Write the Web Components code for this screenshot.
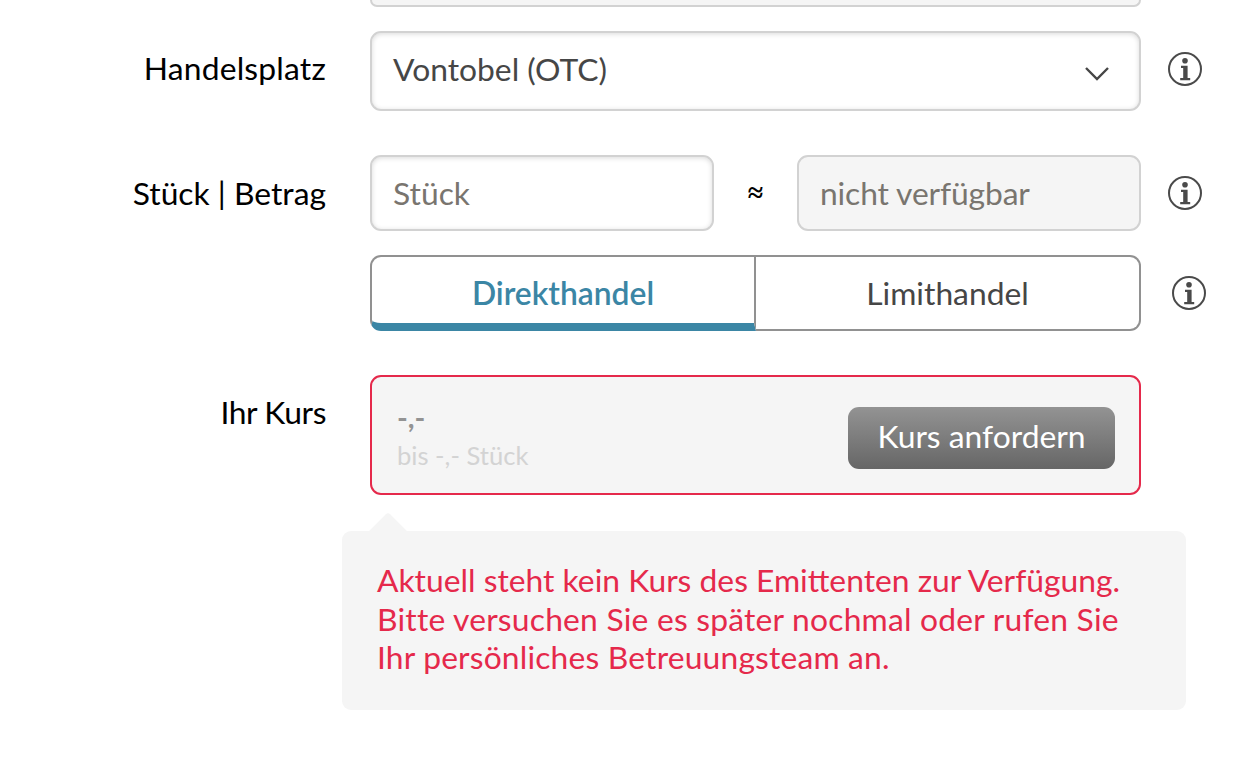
<!DOCTYPE html>
<html lang="de">
<head>
<meta charset="utf-8">
<title>Handelsplatz</title>
<style>
  html, body { margin: 0; padding: 0; background: #fff; }
  body { font-family: Lato, "Open Sans", sans-serif; font-size: 31.8px; height: 778px; overflow: hidden; }
</style>
</head>
<body>
<order-form>
  <form-row first>
    <div slot="field" style="height:7px"><text-field stub></text-field></div>
  </form-row>
  <form-row label="Handelsplatz" info style="margin-top:24px;letter-spacing:.2px;--label-top:19px">
    <select-field slot="field" style="letter-spacing:0">Vontobel (OTC)</select-field>
  </form-row>
  <form-row label="Stück | Betrag" info style="margin-top:44px">
    <div slot="field" style="display:grid;grid-template-columns:344px 1fr 344px;align-items:center;height:76px">
      <text-field placeholder="Stück"></text-field>
      <span style="font:bold 28px 'Liberation Serif',serif;color:#000;text-align:center;line-height:76px">≈</span>
      <text-field placeholder="nicht verfügbar" disabled></text-field>
    </div>
  </form-row>
  <form-row info shifted style="margin-top:24px">
    <mode-toggle slot="field"></mode-toggle>
  </form-row>
  <form-row label="Ihr Kurs" style="margin-top:44px;letter-spacing:-.4px;--label-top:19px">
    <quote-box slot="field" style="letter-spacing:0"></quote-box>
  </form-row>
  <error-note>Aktuell steht kein Kurs des Emittenten zur Verfügung.<br><span style="letter-spacing:.21px">Bitte versuchen Sie es später nochmal oder rufen Sie</span><br><span style="letter-spacing:.17px">Ihr persönliches Betreuungsteam an.</span></error-note>
</order-form>

<script>
class OrderForm extends HTMLElement {
  constructor() {
    super();
    this.attachShadow({ mode: 'open' }).innerHTML = `
      <style>:host { display: block; }</style>
      <slot></slot>`;
  }
}

class InfoIcon extends HTMLElement {
  constructor() {
    super();
    this.attachShadow({ mode: 'open' }).innerHTML = `
      <style>:host { display: block; width: 34px; height: 34px; } svg { display: block; }</style>
      <svg width="34" height="34" viewBox="0 0 34 34" fill="none">
        <circle cx="17" cy="17" r="16" stroke="#4a4a4a" stroke-width="2"/>
        <circle cx="17" cy="8.8" r="2.8" fill="#4a4a4a"/>
        <path d="M13 13.8h6.6v12.2h2.6v2.2h-10v-2.2h3v-10h-2.2z" fill="#4a4a4a"/>
      </svg>`;
  }
}

class FormRow extends HTMLElement {
  constructor() {
    super();
    const label = this.getAttribute('label') || '';
    const info = this.hasAttribute('info') ? '<info-icon></info-icon>' : '';
    this.attachShadow({ mode: 'open' }).innerHTML = `
      <style>
        :host { display: grid; grid-template-columns: 326px 771px 1fr; align-items: start; }
        .label { line-height: 36px; color: #000; text-align: right; padding-top: var(--label-top, 20px); }
        :host([first]) .label, :host([first]) .side { padding: 0; line-height: 0; }
        .field { margin-left: 44px; width: 771px; }
        .side { margin-left: 71px; padding-top: 21px; }
        :host([shifted]) .side { margin-left: 75px; }
      </style>
      <div class="label">${label}</div>
      <div class="field"><slot name="field"></slot></div>
      <div class="side">${info}</div>`;
  }
}

class TextField extends HTMLElement {
  constructor() {
    super();
    const ph = this.getAttribute('placeholder') || '';
    this.attachShadow({ mode: 'open' }).innerHTML = `
      <style>
        :host { display: block; box-sizing: border-box; height: 76px; padding: 0 21px; background: #fff;
          border: 2px solid #d2d2d2; border-radius: 11px; box-shadow: inset 0 1px 5px rgba(0,0,0,.15);
          line-height: 72px; color: #79756f; }
        :host([disabled]) { background: #f5f5f5; box-shadow: none; letter-spacing: -.13px; }
        :host([stub]) { height: 7px; background: #f5f5f5; border-top: 0; border-radius: 0 0 11px 11px; box-shadow: none; }
      </style>${ph}`;
  }
}

class SelectField extends HTMLElement {
  constructor() {
    super();
    this.attachShadow({ mode: 'open' }).innerHTML = `
      <style>
        :host { display: flex; align-items: center; justify-content: space-between; box-sizing: border-box; height: 80px;
          padding: 0 29px 0 21px; background: #fff; border: 2px solid #d2d2d2; border-radius: 11px;
          box-shadow: inset 0 1px 5px rgba(0,0,0,.15); color: #464646; }
        span { margin-bottom: 4px; }
        svg { display: block; margin-top: 6px; }
      </style>
      <span><slot></slot></span>
      <svg width="26" height="16" viewBox="0 0 26 16" fill="none"><path d="M2 2l11 11L24 2" stroke="#464646" stroke-width="2.4"/></svg>`;
  }
}

class ModeToggle extends HTMLElement {
  constructor() {
    super();
    this.attachShadow({ mode: 'open' }).innerHTML = `
      <style>
        :host { display: grid; grid-template-columns: 386px 385px; height: 76px; text-align: center; color: #464646; line-height: 72px; }
        div { box-sizing: border-box; height: 76px; }
        .on { color: #3b86a5; font-weight: 600; border: 2px solid #919191; border-bottom: 8px solid #3b86a5; border-radius: 11px 0 0 11px; }
        .off { border: 2px solid #919191; border-left: 0; border-radius: 0 11px 11px 0; }
      </style>
      <div class="on">Direkthandel</div>
      <div class="off">Limithandel</div>`;
  }
}

class QuoteBox extends HTMLElement {
  constructor() {
    super();
    this.attachShadow({ mode: 'open' }).innerHTML = `
      <style>
        :host { display: flex; align-items: center; justify-content: space-between; box-sizing: border-box; height: 120px;
          padding: 0 24px 0 25px; background: #f5f5f5; border: 2px solid #e5294b; border-radius: 11px; }
        .text { padding-top: 2px; }
        .price { font-size: 29px; font-weight: 700; line-height: 38px; color: #939393; }
        .qty { font-size: 25.6px; line-height: 38px; color: #d3d3d3; }
        button { box-sizing: border-box; width: 267px; height: 62px; margin-top: 6px; border: 0; border-radius: 11px; padding: 0 0 5px; color: #fff;
          font: inherit; background: linear-gradient(#939393, #666); }
      </style>
      <div class="text"><div class="price">-,-</div><div class="qty">bis -,- Stück</div></div>
      <button>Kurs anfordern</button>`;
  }
}

class ErrorNote extends HTMLElement {
  constructor() {
    super();
    this.attachShadow({ mode: 'open' }).innerHTML = `
      <style>
        :host { display: block; position: relative; box-sizing: border-box; width: 844px; height: 179px; margin: 36px 0 0 342px;
          padding: 30px 35px; background: #f5f5f5; border-radius: 9px; line-height: 38.5px; color: #e5294b; white-space: nowrap; }
        .tip { position: absolute; left: 32px; top: -13px; width: 28px; height: 28px; background: #f5f5f5; border-radius: 3px 0 0 0; transform: rotate(45deg); }
        .body { position: relative; }
      </style>
      <div class="tip"></div><div class="body"><slot></slot></div>`;
  }
}

customElements.define('order-form', OrderForm);
customElements.define('info-icon', InfoIcon);
customElements.define('form-row', FormRow);
customElements.define('text-field', TextField);
customElements.define('select-field', SelectField);
customElements.define('mode-toggle', ModeToggle);
customElements.define('quote-box', QuoteBox);
customElements.define('error-note', ErrorNote);
</script>
</body>
</html>
